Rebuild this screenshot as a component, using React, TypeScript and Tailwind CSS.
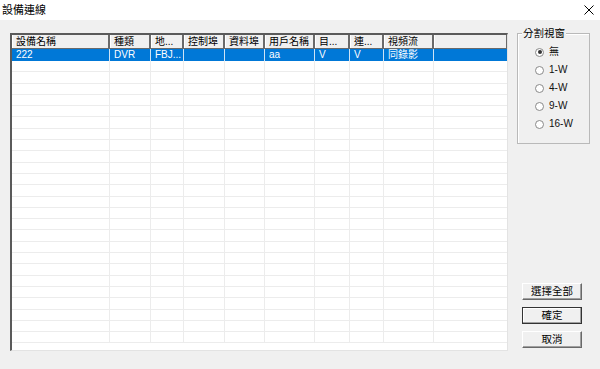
import React from 'react';

const font = { fontFamily: '"Liberation Sans", "Noto Sans CJK TC", sans-serif' };

const columns = [
  { name: '設備名稱', w: 'w-[98px]' },
  { name: '種類', w: 'w-[41px]' },
  { name: '地...', w: 'w-[33px]' },
  { name: '控制埠', w: 'w-[41px]' },
  { name: '資料埠', w: 'w-[40px]' },
  { name: '用戶名稱', w: 'w-[50px]' },
  { name: '目...', w: 'w-[35px]' },
  { name: '連...', w: 'w-[34px]' },
  { name: '視頻流', w: 'w-[50px]' },
  { name: '', w: 'w-[74px]' },
];

const firstRow = ['222', 'DVR', 'FBJ...', '', '', 'aa', 'V', 'V', '同錄影', ''];

const radios = ['無', '1-W', '4-W', '9-W', '16-W'];

function Radio({ label, checked }: { label: string; checked?: boolean }) {
  return (
    <div className="flex items-center h-[18px] pl-[17px] gap-[5px]">
      <div className="w-[9px] h-[9px] rounded-full border border-[#8a8a8a] bg-white flex items-center justify-center">
        {checked && <div className="w-[4px] h-[4px] rounded-full bg-[#333]" />}
      </div>
      <span className="text-[10px] text-[#111] leading-[12px]">{label}</span>
    </div>
  );
}

function Button({ label, primary }: { label: string; primary?: boolean }) {
  return (
    <div
      className={`w-[60px] h-[17px] flex items-center justify-center text-[10.5px] leading-[13px] text-black bg-[#f0f0f0] ${
        primary
          ? 'border border-[#333] shadow-[inset_-1px_-1px_0_#a0a0a0,inset_1px_1px_0_#fff]'
          : 'border-t border-l border-white border-r border-b border-r-[#696969] border-b-[#696969] shadow-[inset_-1px_-1px_0_#a0a0a0]'
      }`}
    >
      {label}
    </div>
  );
}

export default function App() {
  const emptyRows = Array.from({ length: 25 });
  return (
    <div className="w-[600px] h-[369px] bg-[#f0f0f0] flex flex-col overflow-hidden" style={font}>
      {/* title bar */}
      <div className="h-[20px] bg-white flex items-center justify-between pl-[2px] pr-[6px]">
        <span className="text-[11px] text-black leading-[14px]">設備連線</span>
        <svg width="10" height="10" viewBox="0 0 10 10" className="text-black">
          <path d="M0.5 0.5 L9.5 9.5 M9.5 0.5 L0.5 9.5" stroke="currentColor" strokeWidth="1" />
        </svg>
      </div>

      <div className="flex pl-[10px] pt-[13px] gap-[9px]">
        {/* list view */}
        <div className="w-[498px] h-[318px] bg-white border-l-2 border-t-2 border-l-[#5a5a5a] border-t-[#5a5a5a] border-r border-b border-r-[#e3e3e3] border-b-[#e3e3e3] overflow-hidden">
          <div className="flex h-[14px] bg-[#f0f0f0] border-b border-[#6a6a6a]">
            {columns.map((c, i) => (
              <div
                key={i}
                className={`${c.w} shrink-0 h-[13px] border-r-2 border-r-[#6a6a6a] border-l border-l-white pl-[3px] text-[10px] leading-[13px] text-black whitespace-nowrap`}
              >
                {c.name}
              </div>
            ))}
          </div>
          <div className="flex h-[12px] bg-[#0078d7]">
            {columns.map((c, i) => (
              <div
                key={i}
                className={`${c.w} shrink-0 h-[12px] border-r border-r-[#cfe3f5] pl-[4px] text-[10px] leading-[12px] text-white whitespace-nowrap`}
              >
                {firstRow[i]}
              </div>
            ))}
          </div>
          {emptyRows.map((_, r) => (
            <div key={r} className="flex h-[11.3px] border-b border-[#ececec]">
              {columns.map((c, i) => (
                <div key={i} className={`${c.w} shrink-0 border-r border-r-[#ececec]`} />
              ))}
            </div>
          ))}
        </div>

        {/* right panel */}
        <div className="w-[73px] flex flex-col">
          <div className="relative h-[111px] border border-[#b9b9b9] shadow-[inset_1px_1px_0_#fff] pt-[9px]">
            <span className="absolute -top-[7px] left-[4px] px-[1px] bg-[#f0f0f0] text-[10.5px] leading-[13px] text-black">
              分割視窗
            </span>
            {radios.map((r, i) => (
              <Radio key={r} label={r} checked={i === 0} />
            ))}
          </div>
          <div className="flex flex-col gap-[7px] pl-[5px] mt-[139px]">
            <Button label="選擇全部" />
            <Button label="確定" primary />
            <Button label="取消" />
          </div>
        </div>
      </div>
    </div>
  );
}
